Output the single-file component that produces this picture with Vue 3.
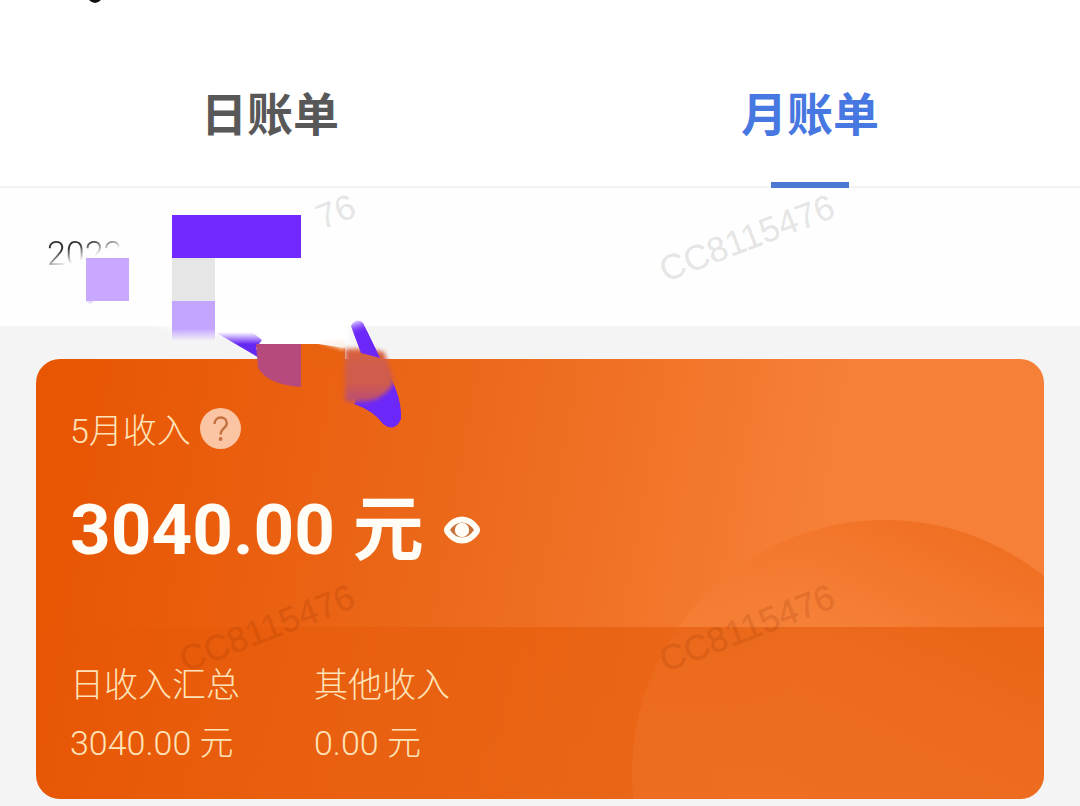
<script setup>
import { ref } from 'vue'

const tabs = [
  { id: 'day', label: '日账单' },
  { id: 'month', label: '月账单' },
]
const active = ref('month')
const items = [
  { label: '日收入汇总', value: '3040.00 元' },
  { label: '其他收入', value: '0.00 元' },
]
</script>

<template>
  <main class="page">
    <nav class="tabs" role="tablist">
      <button
        v-for="tab in tabs"
        :key="tab.id"
        type="button"
        role="tab"
        class="tab"
        :class="{ active: tab.id === active }"
        :aria-selected="tab.id === active"
        @click="active = tab.id"
      >
        {{ tab.label }}
      </button>
    </nav>

    <section class="period"><span class="date">2022</span></section>

    <section class="card">
      <div class="disc" />
      <div class="summary">
        <div class="heading">
          <span>5月收入</span>
          <button type="button" class="help" aria-label="说明">
            <svg width="41" height="41" viewBox="0 0 41 41">
              <circle cx="20.500" cy="20.500" r="20.500" fill="#fbc4a3" />
              <path d="M14.500 16c0-4 2.700-6.500 6.200-6.500s6.100 2.400 6.100 5.700c0 2.700-1.500 4-3.300 5.500-1.900 1.600-2.800 2.600-2.800 5.800" fill="none" stroke="#c4703f" stroke-width="2.400" />
              <circle cx="20.600" cy="31" r="1.900" fill="#c4703f" />
            </svg>
          </button>
        </div>
        <div class="total">
          <strong>3040.00 元</strong>
          <button type="button" class="eye" aria-label="显示金额">
            <svg width="36" height="28" viewBox="0 0 36 28">
              <path d="M1 10.500Q8 0.500 18 0.500T35 10.500Q37 14 35 17.500Q28 27.500 18 27.500T1 17.500Q-1 14 1 10.500Z" fill="#fffdf6" />
              <path d="M6 14Q11 6.500 18 6.500T30 14Q25 21.500 18 21.500T6 14Z" fill="#c8703a" />
              <circle cx="18" cy="14" r="7.200" fill="#fffdf6" />
            </svg>
          </button>
        </div>
      </div>
      <dl class="details">
        <div v-for="item in items" :key="item.label">
          <dt>{{ item.label }}</dt>
          <dd>{{ item.value }}</dd>
        </div>
      </dl>
    </section>

    <svg class="overlay" width="1080" height="806" viewBox="0 0 1080 806" aria-hidden="true">
      <defs>
        <filter id="soft" x="-20%" y="-20%" width="140%" height="140%"><feGaussianBlur stdDeviation="2" /></filter>
        <linearGradient id="lilac" x1="0" y1="0" x2="0" y2="1">
          <stop offset="0.700" stop-color="#c3a5ff" />
          <stop offset="1" stop-color="#c3a5ff" stop-opacity="0" />
        </linearGradient>
        <linearGradient id="wedge" x1="0" y1="0" x2="0" y2="1">
          <stop offset="0" stop-color="#7229ff" stop-opacity="0" />
          <stop offset="0.450" stop-color="#6527f2" />
        </linearGradient>
        <linearGradient id="tail" gradientUnits="userSpaceOnUse" x1="356" y1="319" x2="363" y2="340">
          <stop offset="0" stop-color="#7229ff" stop-opacity="0" />
          <stop offset="0.700" stop-color="#6b28f8" />
        </linearGradient>
        <linearGradient id="rust" x1="0" y1="0" x2="0" y2="1">
          <stop offset="0" stop-color="#d8643a" />
          <stop offset="0.300" stop-color="#d05c4c" />
          <stop offset="0.650" stop-color="#d05c4c" />
          <stop offset="1" stop-color="#b84c78" />
        </linearGradient>
      </defs>
      <path d="M89 0H101Q95 6 89 0Z" fill="#111" />
      <g class="mark">
        <text transform="translate(747 238) rotate(-21)" text-anchor="middle" y="12">CC8115476</text>
        <text transform="translate(267 238) rotate(-21)" text-anchor="end" x="93" y="12">76</text>
      </g>
      <g class="mark warm">
        <text transform="translate(267 628) rotate(-21)" text-anchor="middle" y="12">CC8115476</text>
        <text transform="translate(747 628) rotate(-21)" text-anchor="middle" y="12">CC8115476</text>
      </g>
      <path d="M145 318H350V344H258L215 334Q190 334 145 322Z" fill="#fff" filter="url(#soft)" />
      <path d="M215 315H345V344H258L215 333Z" fill="#fff" />
      <rect x="172" y="215" width="129" height="43" fill="#7229ff" />
      <rect x="86" y="258" width="43" height="43" fill="#c8a9ff" />
      <path d="M86 301H94L90 304Z" fill="#e7dcff" />
      <rect x="172" y="258" width="43" height="43" fill="#e6e6e6" />
      <rect x="172" y="301" width="43" height="40" fill="url(#lilac)" />
      <path d="M300 344H318L345 348V362H300Z" fill="#e9620f" />
      <path d="M318 341H345V350Z" fill="#fdf0e8" filter="url(#soft)" />
      <path d="M215 332H252L262 340L256 348L261 359Z" fill="url(#wedge)" />
      <path d="M256 344H301V387Q268 385 258 368Z" fill="#b64a7c" />
      <path d="M351 326Q356 317 363 323L380 358L395 387Q402 405 401 419Q395 433 383 424Q374 411 354 404L370 375Z" fill="url(#tail)" />
      <path d="M345 349Q370 348 384 352L394 380Q392 390 380 397Q370 404 345 401Z" fill="url(#rust)" filter="url(#soft)" />
      <path d="M351 326Q356 317 363 323L380 358L369 355L361 353Z" fill="url(#tail)" />
    </svg>
  </main>
</template>

<style>
body {
  background: #f4f4f4;
}
</style>

<style scoped>
.page {
  position: relative;
  overflow: hidden;
  padding-bottom: 7px;
  background: #f4f4f4;
  font-family: Roboto, "Noto Sans CJK SC", sans-serif;
}
button {
  border: 0;
  padding: 0;
  background: none;
  font-family: inherit;
  cursor: pointer;
}
.tabs {
  display: flex;
  background: #fff;
  border-bottom: 2px solid #f2f2f2;
}
.tab {
  position: relative;
  flex: 1;
  height: 186px;
  padding-bottom: 12px;
  padding-top: 56px;
  color: #585858;
  font-size: 46px;
  font-weight: 700;
  line-height: 60px;
}
.tab.active {
  color: #4777e1;
}
.tab.active::after {
  content: "";
  position: absolute;
  left: 50%;
  bottom: -2px;
  width: 78px;
  height: 6px;
  margin-left: -39px;
  background: #4c77d3;
}
.period {
  height: 138px;
  box-sizing: border-box;
  padding: 45px 47px;
  background: #fefefe;
}
.date {
  display: inline-block;
  color: #333;
  font-size: 34px;
  font-weight: 300;
  line-height: 40px;
  -webkit-mask-image: linear-gradient(162deg, #000 34%, transparent 60%);
  mask-image: linear-gradient(162deg, #000 34%, transparent 60%);
}
.card {
  position: relative;
  overflow: hidden;
  margin: 33px 36px 0;
  border-radius: 24px;
  background: linear-gradient(100deg, #e85604 5%, #ec6a1c 43%, #f2752a 60%, #f68038 75%);
  color: #ffe3b8;
  font-size: 34px;
  font-weight: 300;
}
.disc {
  position: absolute;
  right: -94px;
  bottom: -227px;
  width: 506px;
  height: 506px;
  border-radius: 50%;
  background: linear-gradient(205deg, rgba(236, 100, 20, 0.6) 12%, rgba(246, 128, 56, 0.1) 34%, rgba(250, 140, 72, 0.7) 60%);
}
.summary {
  position: relative;
  height: 268px;
  box-sizing: border-box;
  padding: 45px 34px 0;
}
.heading {
  display: flex;
  align-items: center;
  gap: 9px;
  height: 48px;
}
.help,
.eye {
  display: flex;
}
.total {
  display: flex;
  align-items: center;
  gap: 20px;
  margin-top: 33px;
  height: 90px;
  color: #fffdf6;
}
.total strong {
  font-size: 71px;
  font-weight: 700;
  line-height: 90px;
}
.details {
  position: relative;
  display: flex;
  gap: 74px;
  height: 172px;
  box-sizing: border-box;
  margin: 0;
  padding: 29px 34px 0;
  background: linear-gradient(90deg, rgba(226, 84, 0, 0.1), rgba(226, 84, 0, 0.5) 58%, rgba(226, 84, 0, 0.5));
}
.details dt,
.details dd {
  margin: 0;
  line-height: 58px;
}
.overlay {
  position: absolute;
  top: 0;
  left: 0;
  pointer-events: none;
}
.mark {
  fill: #000;
  fill-opacity: 0.1;
  stroke: #000;
  stroke-opacity: 0.04;
  font-family: "Liberation Sans", sans-serif;
  font-size: 35px;
}
.mark.warm {
  fill: #8a2a00;
  fill-opacity: 0.17;
  stroke: #8a2a00;
  stroke-opacity: 0.07;
}
</style>
